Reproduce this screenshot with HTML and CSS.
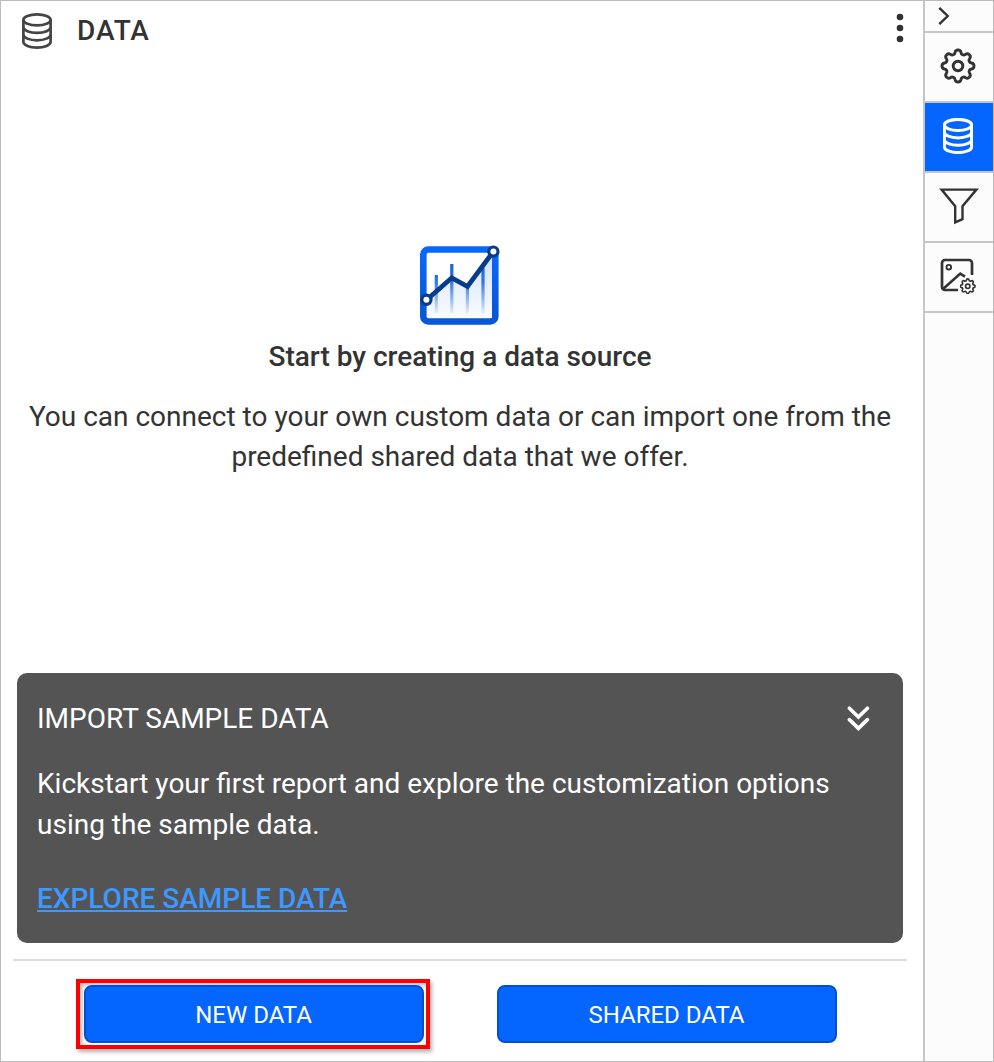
FILE: index.html
```html
<!DOCTYPE html>
<html lang="en">
<head>
<meta charset="utf-8">
<title>Data</title>
<link rel="stylesheet" href="styles.css">
</head>
<body>
<svg class="defs" width="0" height="0">
  <symbol id="database" viewBox="0 0 30 36">
    <g fill="none" stroke="currentColor">
      <ellipse cx="15" cy="6.9" rx="13.6" ry="5.5"/>
      <path d="M1.4 6.9V29C1.4 32 7.5 34.6 15 34.6S28.6 32 28.6 29V6.9"/>
      <path d="M1.4 14.3c0 3 6.1 5.6 13.6 5.6s13.6-2.6 13.6-5.6M1.4 21.7c0 3 6.1 5.6 13.6 5.6s13.6-2.6 13.6-5.6"/>
    </g>
  </symbol>
  <symbol id="gear" viewBox="-18 -18 36 36">
    <g fill="none" stroke="currentColor">
      <path d="M-3-13.5A3.05 3.05 0 0 1 3-13.5A2.7 2.7 0 0 0 7.42-11.67A3.05 3.05 0 0 1 11.67-7.42A2.7 2.7 0 0 0 13.5-3A3.05 3.05 0 0 1 13.5 3A2.7 2.7 0 0 0 11.67 7.42A3.05 3.05 0 0 1 7.42 11.67A2.7 2.7 0 0 0 3 13.5A3.05 3.05 0 0 1-3 13.5A2.7 2.7 0 0 0-7.42 11.67A3.05 3.05 0 0 1-11.67 7.42A2.7 2.7 0 0 0-13.5 3A3.05 3.05 0 0 1-13.5-3A2.7 2.7 0 0 0-11.67-7.42A3.05 3.05 0 0 1-7.42-11.67A2.7 2.7 0 0 0-3-13.5Z"/>
      <circle r="4.8"/>
    </g>
  </symbol>
</svg>
<div class="app">
  <main class="panel">
    <header class="header">
      <svg class="header-icon" width="30" height="36"><use href="#database"/></svg>
      <h1 class="title">DATA</h1>
      <svg class="more" width="8" height="30" viewBox="0 0 8 30"><circle cx="4" cy="4" r="3.3"/><circle cx="4" cy="15" r="3.3"/><circle cx="4" cy="26" r="3.3"/></svg>
    </header>
    <section class="empty">
      <svg class="logo" width="82" height="82" viewBox="0 0 82 82">
        <defs>
          <linearGradient id="frame" x1="0" y1="0" x2="0" y2="1"><stop offset="0" stop-color="#0868fd"/><stop offset="1" stop-color="#0757d6"/></linearGradient>
          <linearGradient id="area" x1="0" y1="0" x2="0" y2="1"><stop offset="0" stop-color="#d3e1fc"/><stop offset="1" stop-color="#fafcff"/></linearGradient>
          <linearGradient id="bar" gradientUnits="userSpaceOnUse" x1="0" y1="18" x2="0" y2="68"><stop offset="0" stop-color="#0b5fe8"/><stop offset=".4" stop-color="#3177e5"/><stop offset="1" stop-color="#dfeafc"/></linearGradient>
        </defs>
        <rect x="4.3" y="5.5" width="72" height="72" rx="5" fill="#fff" stroke="url(#frame)" stroke-width="6.6"/>
        <path d="M8 56L33 34L49 42L73 9V74H8Z" fill="url(#area)"/>
        <path d="M17.3 31V69M32.8 20V69M48.4 44V69M64 24V69" stroke="url(#bar)" stroke-width="3.2"/>
        <path d="M7.5 56L32.8 33.8L48.5 42.5L74.4 7.5" fill="none" stroke="#083b8c" stroke-width="4.8"/>
        <circle cx="7.4" cy="55.8" r="4.6" fill="#fff" stroke="#083b8c" stroke-width="3.2"/>
        <circle cx="74.4" cy="7.6" r="4.6" fill="#fff" stroke="#083b8c" stroke-width="3.2"/>
      </svg>
      <h2 class="empty-title">Start by creating a data source</h2>
      <p class="empty-text">You can connect to your own custom data or can import one from the predefined shared data that we offer.</p>
    </section>
    <section class="sample">
      <div class="sample-head">
        <h3 class="sample-title">IMPORT SAMPLE DATA</h3>
        <svg class="collapse" width="24" height="26" viewBox="0 0 24 26"><path d="M3.4 2.2l9 8.8 9-8.8M3.4 13.6l9 8.8 9-8.8"/></svg>
      </div>
      <p class="sample-text">Kickstart your first report and explore the customization options using the sample data.</p>
      <a class="sample-link" href="#">EXPLORE SAMPLE DATA</a>
    </section>
    <footer class="footer">
      <div class="highlight"><button class="button">NEW DATA</button></div>
      <button class="button">SHARED DATA</button>
    </footer>
  </main>
  <nav class="rail">
    <div class="rail-item rail-toggle"><svg width="12" height="20" viewBox="0 0 12 20"><path d="M1.3 1.8l8.4 8.2-8.4 8.2" fill="none" stroke="currentColor" stroke-width="2.4"/></svg></div>
    <div class="rail-item"><svg class="gear" width="36" height="36"><use href="#gear"/></svg></div>
    <div class="rail-item active"><svg class="rail-database" width="30" height="36"><use href="#database"/></svg></div>
    <div class="rail-item"><svg class="filter" width="40" height="38" viewBox="0 0 40 38"><path d="M2.6 2.6H37.4L23.5 19.2V32.2L16.2 35.4V19.2Z" fill="none" stroke="currentColor" stroke-width="2.4"/></svg></div>
    <div class="rail-item"><svg class="image-icon" width="38" height="38" viewBox="0 0 38 38"><g fill="none" stroke="currentColor" stroke-width="2.7"><path d="M33 18V6a3 3 0 0 0-3-3H6a3 3 0 0 0-3 3V30a3 3 0 0 0 3 3H19"/><path d="M4 32L21.3 16.6L26 19.6"/><circle cx="9.8" cy="10.2" r="2.3" stroke-width="1.9"/></g><svg class="small-gear" x="20.5" y="21" width="16.5" height="16.5"><use href="#gear"/></svg></svg></div>
  </nav>
</div>
</body>
</html>
```
FILE: styles.css
```css
* { box-sizing: border-box; }
body { margin: 0; font-family: Roboto, "Liberation Sans", sans-serif; color: #333; }
h1, h2, h3, p { margin: 0; }
svg { display: block; flex: none; }
.defs { height: 0; }
.app { display: flex; height: 1062px; border: 1px solid #bbb; background: #fff; overflow: hidden; }
.panel { flex: 1; display: flex; flex-direction: column; }
.header { display: flex; align-items: flex-start; height: 60px; padding: 12px 19px 0 21px; color: #444; }
.header-icon { stroke-width: 2.7; }
.title { flex: 1; margin-left: 25px; font-size: 28px; line-height: 36px; font-weight: 500; letter-spacing: 0.9px; color: #333; }
.more { fill: #333; }
.empty { height: 612px; padding: 183px 16px 0; text-align: center; display: flex; flex-direction: column; align-items: center; margin-right: 4px; }
.empty-title { margin-top: 13px; font-size: 28px; line-height: 36px; font-weight: 500; }
.empty-text { margin-top: 22px; font-size: 28px; line-height: 40px; }
.sample { height: 270px; margin: 0 20px 0 16px; padding: 25px 20px 0; border-radius: 10px; background: #545454; color: #fff; font-size: 28px; line-height: 41px; }
.sample-head { display: flex; justify-content: space-between; align-items: center; padding-right: 13px; }
.sample-title { font-size: 28px; font-weight: 400; }
.collapse { fill: none; stroke: #fff; stroke-width: 3.6; stroke-linecap: round; }
.sample-text { margin-top: 24px; }
.sample-link { display: block; width: max-content; margin-top: 33px; font-weight: 500; color: #3d98ff; text-decoration-thickness: 2px; text-underline-offset: 2px; }
.footer { display: flex; align-items: center; gap: 67px; height: 102px; margin: 16px 16px 0 12px; padding: 6px 0 0 63px; border-top: 2px solid #ddd; }
.highlight { padding: 2px 2px 2px 4px; border: 4px solid #f00; box-shadow: 2px 3px 4px rgba(0,0,0,.3), inset 2px 2px 4px rgba(0,0,0,.3); }
.button { display: block; width: 340px; height: 58px; padding: 2px 1px 0 0; border: 2px solid #0050d0; border-radius: 8px; background: #0565ff; color: #fff; font-family: inherit; font-size: 24px; line-height: 52px; }
.rail { width: 70px; border-left: 2px solid #c6c6c6; background: #fcfcfc; color: #333; }
.rail-item { display: flex; align-items: center; justify-content: center; height: 70px; padding: 0 2px 2px 0; border-bottom: 2px solid #c6c6c6; }
.rail-toggle { height: 32px; justify-content: flex-start; padding: 0 0 0 13px; }
.gear { stroke-width: 2.9; }
.small-gear { stroke-width: 3.6; }
.rail-database { stroke-width: 3; }
.active { background: #0565ff; color: #fff; }
.filter { margin-left: 2px; }
```
